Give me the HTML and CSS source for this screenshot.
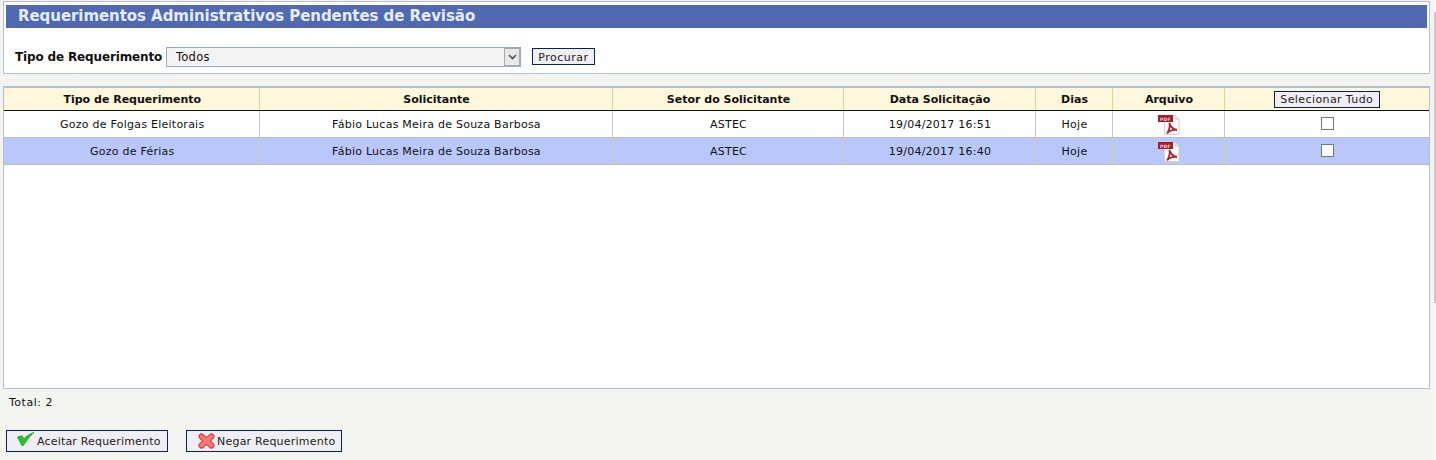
FILE: index.html
```html
<!DOCTYPE html>
<html lang="pt">
<head>
<meta charset="utf-8">
<title>Requerimentos Administrativos Pendentes de Revisão</title>
<link rel="stylesheet" href="styles.css">
</head>
<body>
<div class="page">
  <section class="panel">
    <h1 class="title">Requerimentos Administrativos Pendentes de Revisão</h1>
    <form class="filter">
      <label class="filter-label">Tipo de Requerimento</label>
      <div class="select"><span class="select-value">Todos</span><span class="select-arrow"><svg width="9" height="6" viewBox="0 0 9 6"><path d="M1 1l3.500 3.500L8 1" fill="none" stroke="#555" stroke-width="1.600"/></svg></span></div>
      <button type="button" class="btn btn-search">Procurar</button>
    </form>
  </section>
  <section class="grid-box">
    <table class="grid">
      <colgroup>
        <col class="c1"><col class="c2"><col class="c3"><col class="c4"><col class="c5"><col class="c6"><col class="c7">
      </colgroup>
      <thead>
        <tr>
          <th>Tipo de Requerimento</th><th>Solicitante</th><th>Setor do Solicitante</th><th>Data Solicitação</th><th>Dias</th><th>Arquivo</th>
          <th class="th-all"><button type="button" class="btn btn-all">Selecionar Tudo</button></th>
        </tr>
      </thead>
      <tbody>
        <tr>
          <td>Gozo de Folgas Eleitorais</td><td>Fábio Lucas Meira de Souza Barbosa</td><td>ASTEC</td><td>19/04/2017 16:51</td><td>Hoje</td>
          <td><svg class="pdf" viewBox="0 0 22 21"><use href="#pdf-icon"/></svg></td>
          <td><span class="check"></span></td>
        </tr>
        <tr class="selected">
          <td>Gozo de Férias</td><td>Fábio Lucas Meira de Souza Barbosa</td><td>ASTEC</td><td>19/04/2017 16:40</td><td>Hoje</td>
          <td><svg class="pdf" viewBox="0 0 22 21"><use href="#pdf-icon"/></svg></td>
          <td><span class="check"></span></td>
        </tr>
      </tbody>
    </table>
  </section>
  <p class="total">Total: 2</p>
  <div class="actions">
    <button type="button" class="btn btn-action btn-accept"><svg class="ico-check" width="17" height="14" viewBox="0 0 17 14"><path d="M0.500 5L5 3.800 7 7C9 4.500 13 1.800 16.800 0.500 13 3.800 9.500 8.500 6.300 13.500L4.800 13.500z" fill="#22c822" stroke="#128c12" stroke-width=".7"/></svg>Aceitar Requerimento</button>
    <button type="button" class="btn btn-action btn-deny"><svg width="17" height="16" viewBox="0 0 17 16"><path d="M3.500 3.500L13.500 12.500M13.500 3.500L3.500 12.500" fill="none" stroke="#d43a3a" stroke-width="6" stroke-linecap="round"/><path d="M3.500 3.500L13.500 12.500M13.500 3.500L3.500 12.500" fill="none" stroke="#f47a7a" stroke-width="4" stroke-linecap="round"/></svg>Negar Requerimento</button>
  </div>
</div>
<div class="scroll-track"><div class="scroll-thumb"></div></div>
<svg class="defs" width="0" height="0">
  <defs>
    <symbol id="pdf-icon" viewBox="0 0 22 21">
      <path d="M6.500 1.500H17L21 5V20.500H6.500z" fill="#fff" stroke="#cfcfcf"/>
      <path d="M17 1.500V5H21" fill="#eee" stroke="#c9c9c9"/>
      <rect x="0" y="1" width="15" height="7" fill="#a31d2c"/>
      <text x="2" y="6.500" class="pdf-text">PDF</text>
      <path d="M11.500 9c.8 4 3 6 7.500 7-4-.5-7 0-10 3.500 2-3 3.200-6.500 2.500-10.500z" fill="none" stroke="#b5232f" stroke-width="1.800"/>
    </symbol>
  </defs>
</svg>
</body>
</html>
```
FILE: styles.css
```css
html, body { margin: 0; padding: 0; }
body {
  background: #f3f4f0;
  font-family: "DejaVu Sans", Verdana, sans-serif;
  font-size: 11px;
  letter-spacing: .25px;
  color: #111;
  height: 460px;
  overflow: hidden;
}
.page { width: 1427px; padding: 1px 0 0 3px; }
.panel {
  background: #fff;
  border: 1px solid #b4bedd;
  height: 68px;
  padding: 3px 2px 0;
}
.title {
  margin: 0;
  height: 23px;
  line-height: 23px;
  background: #5069b0;
  color: #e8ecf8;
  font-size: 15px;
  font-weight: bold;
  letter-spacing: -.06px;
  padding-left: 12px;
}
.filter {
  display: flex;
  align-items: center;
  padding: 17px 0 0 9px;
  height: 23px;
}
.filter-label { font-size: 12px; font-weight: bold; color: #111; width: 151px; letter-spacing: -.15px; }
.select {
  width: 355px;
  height: 20px;
  box-sizing: border-box;
  border: 1px solid #94a8c8;
  background: #f3f3f3;
  display: flex;
  justify-content: space-between;
  font-size: 11.500px;
}
.select-value { padding: 2px 0 0 9px; }
.select-arrow {
  width: 14px;
  background: #e8e8e8;
  border: 1px solid #aaa;
  display: flex;
  align-items: center;
  justify-content: center;
}
.btn {
  font-family: inherit;
  font-size: 11px;
  color: #222;
  background: #efeff3;
  border: 1px solid #0a1f5c;
  border-radius: 0;
  padding: 0;
  letter-spacing: .3px;
}
.btn-search { margin-left: 11px; width: 63px; height: 17px; padding-top: 1px; letter-spacing: .5px; }
.grid-box {
  margin-top: 12px;
  height: 300px;
  background: #fff;
  border: 1px solid #b4bedd;
  border-top: 2px solid #b8bfd0;
}
.grid {
  width: 100%;
  table-layout: fixed;
  border-collapse: collapse;
}
.c1 { width: 255px; } .c2 { width: 353px; } .c3 { width: 231px; } .c4 { width: 192px; }
.c5 { width: 77px; } .c6 { width: 112px; }
.grid th {
  height: 22px;
  padding: 0 0 0 2px;
  background: #fdf7dc;
  border-right: 1px solid #d8d29a;
  border-bottom: 1px solid #111;
  font-size: 11px;
  font-weight: bold;
  letter-spacing: 0;
}
.grid .th-all { padding: 0; }
.grid td {
  height: 26px;
  padding: 0 0 0 2px;
  text-align: center;
  background: #fff;
  border-right: 1px solid #c8c8c8;
  border-bottom: 1px solid #c0c0c0;
}
.grid th:last-child, .grid td:last-child { border-right: 0; }
.grid .selected td { background: #bac7fb; border-right-color: #d0cfa8; }
.btn-all { width: 106px; height: 17px; display: block; margin: 0 auto; padding-top: 1px; letter-spacing: .4px; }
.pdf { width: 22px; height: 21px; display: block; margin: 0 auto; }
.pdf-text { font-size: 4.500px; font-weight: bold; fill: #f0d0d0; }
.defs { position: absolute; }
.check {
  display: block;
  width: 11px;
  height: 11px;
  margin: 0 auto 2px;
  background: #fff;
  border: 1px solid #777;
}
.total { margin: 7px 0 0 6px; height: 14px; line-height: 14px; letter-spacing: .5px; }
.actions { display: flex; margin: 20px 0 0 3px; gap: 18px; }
.btn-action {
  height: 22px;
  display: flex;
  align-items: center;
  color: #222;
}
.btn-accept { width: 162px; padding-left: 10px; gap: 3px; letter-spacing: .18px; }
.btn-deny { width: 156px; padding-left: 11px; gap: 2px; letter-spacing: .22px; }
.ico-check { margin-top: -5px; }
.scroll-track { position: absolute; top: 0; right: 0; width: 2px; height: 460px; background: #f8f8f8; }
.scroll-thumb { margin-top: 12px; height: 291px; background: #c8c8c8; }
```
